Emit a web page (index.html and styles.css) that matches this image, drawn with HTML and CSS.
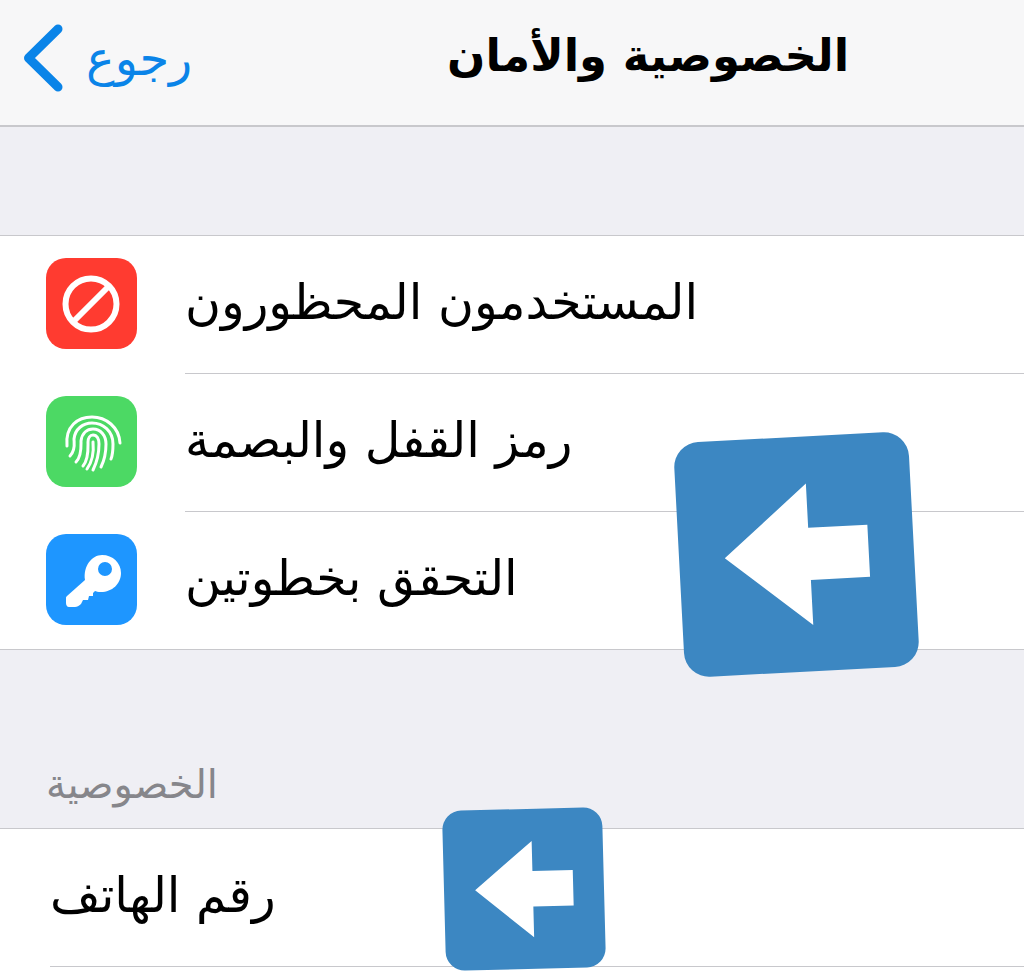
FILE: index.html
```html
<!DOCTYPE html>
<html lang="ar">
<head>
  <meta charset="UTF-8" />
  <title>الخصوصية والأمان</title>
  <link rel="stylesheet" href="styles.css">
</head>
<body>

<div class="page">
  <div class="navbar">
    <div class="back">
      <svg class="chevron" viewBox="0 0 44 74"><path d="M37 8 L7.500 37 L37 66"/></svg>
      <span class="back-text" dir="rtl">رجوع</span>
    </div>
    <div class="title" dir="rtl">الخصوصية والأمان</div>
  </div>

  <div class="gap-top"></div>

  <div class="group">
    <div class="row">
      <div class="icon icon-red">
        <svg viewBox="0 0 91 91"><circle cx="45" cy="46" r="25.500"/><path d="M27 64 L63 28"/></svg>
      </div>
      <div class="row-body"><span dir="rtl">المستخدمون المحظورون</span></div>
    </div>
    <div class="row">
      <div class="icon icon-green">
        <svg class="print" viewBox="0 0 91 91">
          <path d="M21 50 C19 30 32 21 46 21 C60 21 73 31 74 47"/>
          <path d="M24 60 C30 54 28 47 28 43 C29 33 37 27 46 27 C57 27 67 35 67 48 C67 54 67 58 65 63"/>
          <path d="M30 66 C36 60 35 50 35 45 C36 37 41 33 47 33 C55 33 60 40 60 48 C60 57 58 65 55 71"/>
          <path d="M37 70 C43 63 42 52 42 46 C42 42 44 39 47 39 C51 39 53 43 53 48 C53 57 51 66 47 74"/>
          <path d="M47 46 C48 56 46 66 41 73"/>
        </svg>
      </div>
      <div class="row-body"><span dir="rtl">رمز القفل والبصمة</span></div>
    </div>
    <div class="row row-end">
      <div class="icon icon-blue">
        <svg class="key" viewBox="0 0 91 91">
          <path fill-rule="evenodd" d="M21 62 L39 46 C37 32 46 21 56 21 C67 21 75 29 75 39 C75 50 66 58 55 58 C52 58 50 57.500 49 57 L47 59 L47 62 L43 62 L42 66 L37 66 L35 70 C33 72 31 73 29 73 L23 73 C21 73 20 71 20 69 L20 64 C20 63 20.500 62.500 21 62 Z M59 28 A7 7 0 1 0 59 42 A7 7 0 1 0 59 28 Z"/>
        </svg>
      </div>
      <div class="row-body"><span dir="rtl">التحقق بخطوتين</span></div>
    </div>
  </div>

  <div class="section-head"><span dir="rtl">الخصوصية</span></div>

  <div class="group group-last">
    <div class="row row-plain">
      <div class="row-body"><span dir="rtl">رقم الهاتف</span></div>
    </div>
  </div>
</div>

<svg class="arrow arrow-big" viewBox="0 0 234 234"><polygon points="45.500,117 130,47 130,91 189,91 189,143 130,143 130,188"/></svg>
<svg class="arrow arrow-small" viewBox="0 0 234 234"><polygon points="45.500,117 130,47 130,91 189,91 189,143 130,143 130,188"/></svg>

</body>
</html>
```

FILE: styles.css
```css
html, body { margin: 0; padding: 0; }
body { width: 1024px; height: 974px; overflow: hidden; background: #efeff4; color: #000; font-family: "DejaVu Sans", sans-serif; position: relative; }
.page { display: flex; flex-direction: column; height: 974px; }

.navbar { height: 125px; flex: none; background: #f7f7f8; border-bottom: 2px solid #c8c8cc; display: flex; align-items: center; position: relative; }
.back { display: flex; align-items: center; padding-left: 21px; padding-bottom: 10px; gap: 21px; color: #0a84e8; }
.chevron { width: 44px; height: 74px; fill: none; stroke: #0a84e8; stroke-width: 9; stroke-linecap: round; stroke-linejoin: round; display: block; }
.back-text { font-size: 48px; line-height: 60px; }
.title { position: absolute; left: 447px; top: 26px; font-size: 45px; font-weight: bold; line-height: 60px; white-space: nowrap; }

.gap-top { height: 108px; flex: none; }

.group { background: #fff; border-top: 1px solid #c8c8cc; border-bottom: 1px solid #c8c8cc; flex: none; }
.group-last { flex: 1; border-bottom: none; }
.row { height: 138px; display: flex; padding-left: 46px; gap: 48px; }
.row-end { height: 137px; }
.row-body { flex: 1; display: flex; align-items: center; padding-bottom: 4px; font-size: 49px; border-bottom: 1px solid #c8c8cc; }
.row-end .row-body { border-bottom: none; }
.row-plain { padding-left: 50px; gap: 0; }

.icon { width: 91px; height: 91px; margin-top: 22px; border-radius: 20px; flex: none; }
.icon svg { display: block; width: 91px; height: 91px; fill: none; stroke: #fff; stroke-width: 6; }
.icon-red { background: #ff3b30; }
.icon-green { background: #4cd964; }
.icon-blue { background: #1e96ff; }
.icon svg.print { stroke-width: 3; stroke-linecap: round; }
.icon svg.key { fill: #fff; stroke: none; }

.section-head { height: 178px; flex: none; box-sizing: border-box; padding-left: 46px; display: flex; align-items: flex-end; padding-bottom: 21px; color: #86868b; font-size: 40px; }

/* stickers on top of the list */
.arrow { position: absolute; background: #3c87c2; fill: #fff; display: block; }
.arrow-big { left: 679px; top: 437px; width: 235px; height: 235px; border-radius: 25px; transform: rotate(-3deg); }
.arrow-small { left: 444px; top: 809px; width: 160px; height: 160px; border-radius: 19px; transform: rotate(-1.500deg); }
```
